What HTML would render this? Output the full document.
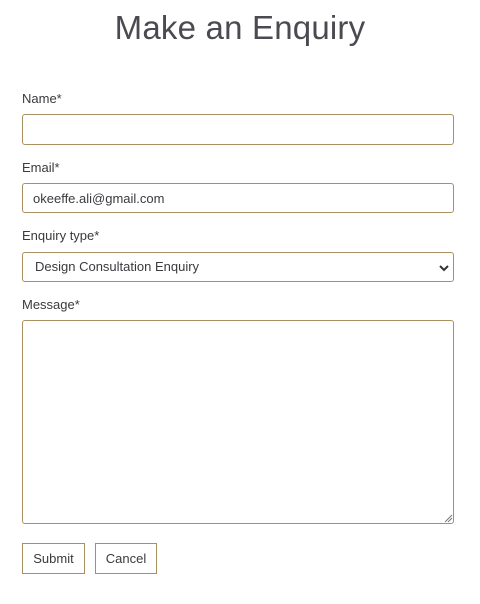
<!DOCTYPE html>
<html><head><style>
body{margin:0;width:480px;height:604px;background:#fff;font-family:"Liberation Sans",sans-serif;color:#3a3a3f;position:relative;overflow:hidden}
h1{position:absolute;top:9px;left:0;width:480px;margin:0;text-align:center;font-weight:normal;font-size:33px;color:#4a4a50;letter-spacing:0.2px}
.l{position:absolute;left:22px;font-size:13px;color:#3a3a3f}
.b{position:absolute;left:22px;width:430px;border:1px solid #a89060;border-radius:3px;box-sizing:border-box;width:432px}
.t{position:absolute;font-size:13px;color:#3a3a3f}
.btn{position:absolute;top:543px;height:31px;border:1px solid #a89060;box-sizing:border-box;font-size:13px;line-height:29px;text-align:center;color:#3a3a3f}
</style></head><body>
<h1>Make an Enquiry</h1>
<div class="l" style="top:91px">Name*</div>
<div class="b" style="top:114px;height:31px"></div>
<div class="l" style="top:160px">Email*</div>
<div class="b" style="top:183px;height:30px"></div>
<div class="t" style="left:33px;top:191px">okeeffe.ali@gmail.com</div>
<div class="l" style="top:228px">Enquiry type*</div>
<div class="b" style="top:252px;height:30px"></div>
<div class="t" style="left:35px;top:259px">Design Consultation Enquiry</div>
<svg style="position:absolute;left:439px;top:264px" width="10" height="8"><path d="M1 2 L5 6 L9 2" stroke="#333" stroke-width="2" fill="none"/></svg>
<div class="l" style="top:297px">Message*</div>
<div class="b" style="top:320px;height:204px"></div>
<svg style="position:absolute;left:444px;top:514px" width="9" height="9"><path d="M1 8 L8 1 M4 8 L8 4" stroke="#777" stroke-width="1"/></svg>
<div class="btn" style="left:22px;width:63px">Submit</div>
<div class="btn" style="left:95px;width:62px">Cancel</div>
</body></html>
